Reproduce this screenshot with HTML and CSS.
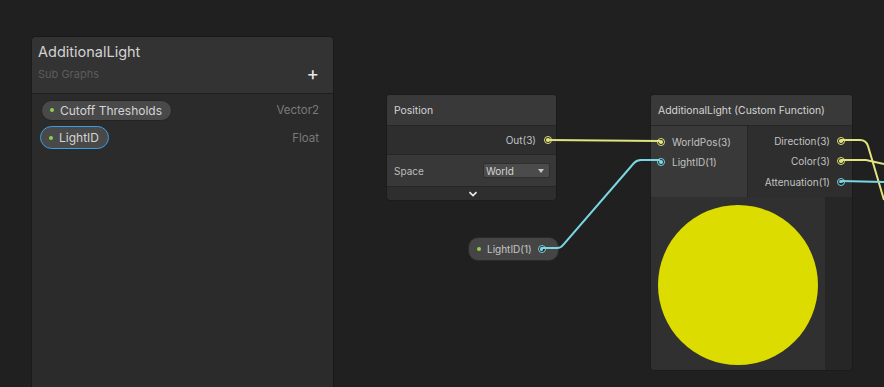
FILE: index.html
```html
<!DOCTYPE html>
<html>
<head>
<meta charset="utf-8">
<link rel="stylesheet" href="styles.css">
</head>
<body>
<div class="canvas">
  <svg class="wires" width="884" height="387" viewBox="0 0 884 387">
    <path d="M548 140 L660 141" class="w-y"/>
    <path d="M541 248 L557 248 Q561 248 563 245 L634 163 Q637 160 641 160 L660 160" class="w-c"/>
    <path d="M841 140 L860 140 Q866 140 868 146 L884 200" class="w-y"/>
    <path d="M841 160 L866 160 L884 164" class="w-y"/>
    <path d="M841 181 L884 182" class="w-c"/>
  </svg>

  <div class="blackboard">
    <div class="bb-header">
      <div class="bb-title">AdditionalLight</div>
      <div class="bb-sub">
        <span>Sub Graphs</span>
        <span class="bb-plus">+</span>
      </div>
    </div>
    <div class="bb-body">
      <div class="bb-row">
        <span class="pill"><i class="gdot"></i>Cutoff Thresholds</span>
        <span class="bb-type">Vector2</span>
      </div>
      <div class="bb-row">
        <span class="pill pill-sel"><i class="gdot"></i>LightID</span>
        <span class="bb-type">Float</span>
      </div>
    </div>
  </div>

  <div class="node node-pos">
    <div class="node-head">Position</div>
    <div class="pos-ports">
      <span class="port-label">Out(3)</span><span class="pin pin-y"></span>
    </div>
    <div class="pos-ctrl">
      <span class="ctrl-label">Space</span>
      <span class="dropdown">World<span class="caret"></span></span>
    </div>
    <div class="pos-collapse">
      <svg width="10" height="6" viewBox="0 0 10 6"><path d="M1.5 1.2 L5 4.6 L8.5 1.2" fill="none" stroke="#e6e6e6" stroke-width="1.8"/></svg>
    </div>
  </div>

  <div class="prop-node">
    <i class="gdot"></i><span class="prop-label">LightID(1)</span><span class="pin pin-c"></span>
  </div>

  <div class="node node-cf">
    <div class="node-head">AdditionalLight (Custom Function)</div>
    <div class="cf-ports">
      <div class="cf-in">
        <div class="in-row"><span class="pin pin-y"></span><span class="port-label">WorldPos(3)</span></div>
        <div class="in-row"><span class="pin pin-c"></span><span class="port-label">LightID(1)</span></div>
      </div>
      <div class="cf-out">
        <div class="out-row"><span class="port-label">Direction(3)</span><span class="pin pin-y"></span></div>
        <div class="out-row"><span class="port-label">Color(3)</span><span class="pin pin-y"></span></div>
        <div class="out-row"><span class="port-label">Attenuation(1)</span><span class="pin pin-c"></span></div>
      </div>
    </div>
    <div class="cf-preview-row">
      <div class="cf-preview"><div class="sphere"></div></div>
    </div>
  </div>
</div>
</body>
</html>
```
FILE: styles.css
```css
* { box-sizing: border-box; }
html, body { margin: 0; padding: 0; }
body {
  background: #202020;
  font-family: "Inter", "Noto Sans", sans-serif;
  width: 884px;
  height: 387px;
  overflow: hidden;
}
.canvas { position: relative; width: 884px; height: 387px; }
.wires { position: absolute; left: 0; top: 0; z-index: 3; pointer-events: none; }
.wires path { fill: none; stroke-width: 2; }
.w-y { stroke: #e4e47e; }
.w-c { stroke: #7ad6e2; }

/* Blackboard */
.blackboard {
  position: absolute;
  left: 31px; top: 36px;
  width: 303px; height: 370px;
  background: #2b2b2b;
  border: 1px solid #191919;
  border-radius: 5px;
  overflow: hidden;
}
.bb-header {
  height: 57px;
  background: #333333;
  border-bottom: 1px solid #1e1e1e;
  padding: 6px 14px 0 6px;
}
.bb-title { color: #d2d2d2; font-size: 14.5px; line-height: 18px; }
.bb-sub {
  margin-top: 6px;
  display: flex; justify-content: space-between; align-items: center;
  color: #5c5c5c; font-size: 11px; line-height: 14px;
}
.bb-plus { color: #e8e8e8; font-size: 19px; line-height: 14px; font-weight: 400; }
.bb-body { padding: 5px 14px 0 9px; }
.bb-row {
  height: 25px;
  display: flex; align-items: center; justify-content: space-between;
}
.bb-row:first-child { height: 22px; margin-bottom: 4px; }
.pill {
  display: inline-flex; align-items: center;
  height: 21px;
  padding: 0 9px 0 8px;
  background: #494949;
  border: 1px solid #242424;
  border-radius: 11px;
  color: #d4d4d4; font-size: 12px;
}
.pill-sel { border: 1px solid #3b9ee6; height: 23px; border-radius: 12px; margin-left: -1px; }
.gdot {
  display: inline-block; width: 4px; height: 4px; border-radius: 50%;
  background: #8bd24c; margin-right: 6px;
}
.bb-type { color: #7a7a7a; font-size: 11.5px; }

/* nodes */
.node {
  position: absolute;
  background: #2e2e2e;
  border: 1px solid #1b1b1b;
  border-radius: 4px;
  overflow: hidden;
  font-size: 10px;
  color: #c4c4c4;
}
.node-head {
  height: 31px;
  background: #393939;
  border-bottom: 1px solid #262626;
  display: flex; align-items: center;
  padding-left: 7px;
  color: #d4d4d4;
  font-size: 10.4px;
}
.port-label { color: #c2c2c2; }
.pin {
  display: inline-flex; align-items: center; justify-content: center;
  width: 8px; height: 8px; border-radius: 50%;
  border: 1.3px solid;
  background: #222;
  flex: none;
}
.pin::after { content: ""; width: 3.5px; height: 3.5px; border-radius: 50%; background: currentColor; }
.pin-y { color: #e4e47e; border-color: #e4e47e; }
.pin-c { color: #7ad6e2; border-color: #7ad6e2; }

.node-pos { left: 386px; top: 94px; width: 171px; height: 107px; }
.pos-ports {
  height: 29px;
  background: #2e2e2e;
  display: flex; align-items: center; justify-content: flex-end;
  padding-right: 4px; gap: 8px;
  border-bottom: 1px solid #262626;
}
.pos-ctrl {
  height: 32px;
  background: #383838;
  border-bottom: 1px solid #262626;
  display: flex; align-items: center; justify-content: space-between;
  padding: 0 6px 0 7px;
}
.ctrl-label { color: #bdbdbd; }
.dropdown {
  width: 67px; height: 15px;
  background: #4b4b4b;
  border: 1px solid #2f2f2f;
  border-radius: 2px;
  display: flex; align-items: center; justify-content: space-between;
  padding: 0 5px 0 2px;
  color: #d4d4d4; font-size: 10px;
}
.caret {
  width: 0; height: 0;
  border-left: 3.5px solid transparent; border-right: 3.5px solid transparent;
  border-top: 4px solid #c8c8c8;
}
.pos-collapse {
  height: 13px;
  display: flex; align-items: center; justify-content: center;
  padding-left: 2px;
}

.prop-node {
  position: absolute;
  left: 468px; top: 237px;
  width: 91px; height: 24px;
  background: #454545;
  border: 1px solid #2a2a2a;
  border-radius: 10px;
  display: flex; align-items: center;
  padding-left: 8px;
  font-size: 10px;
}
.prop-node .gdot { margin-right: 6px; }
.prop-label { color: #c6c6c6; margin-right: 6px; }

.node-cf { left: 650px; top: 94px; width: 203px; height: 277px; background: #262626; }
.cf-ports { display: flex; height: 71px; }
.cf-in {
  width: 97px; background: #393939;
  border-right: 1px solid #262626;
  padding: 6px 0 0 6px;
}
.in-row { display: flex; align-items: center; gap: 7px; height: 20px; }
.cf-out {
  flex: 1; background: #2e2e2e;
  padding: 5px 7px 0 0;
  display: flex; flex-direction: column; align-items: flex-end;
}
.out-row { display: flex; align-items: center; gap: 7px; height: 20px; }
.out-row:nth-child(2) { height: 20px; }
.out-row:nth-child(3) { height: 21px; }
.cf-preview-row { display: flex; }
.cf-preview {
  width: 174px; height: 175px;
  background: #303030;
  display: flex; align-items: center; justify-content: center;
}
.sphere {
  width: 160px; height: 160px; border-radius: 50%;
  background: #dcdc00;
}
```
